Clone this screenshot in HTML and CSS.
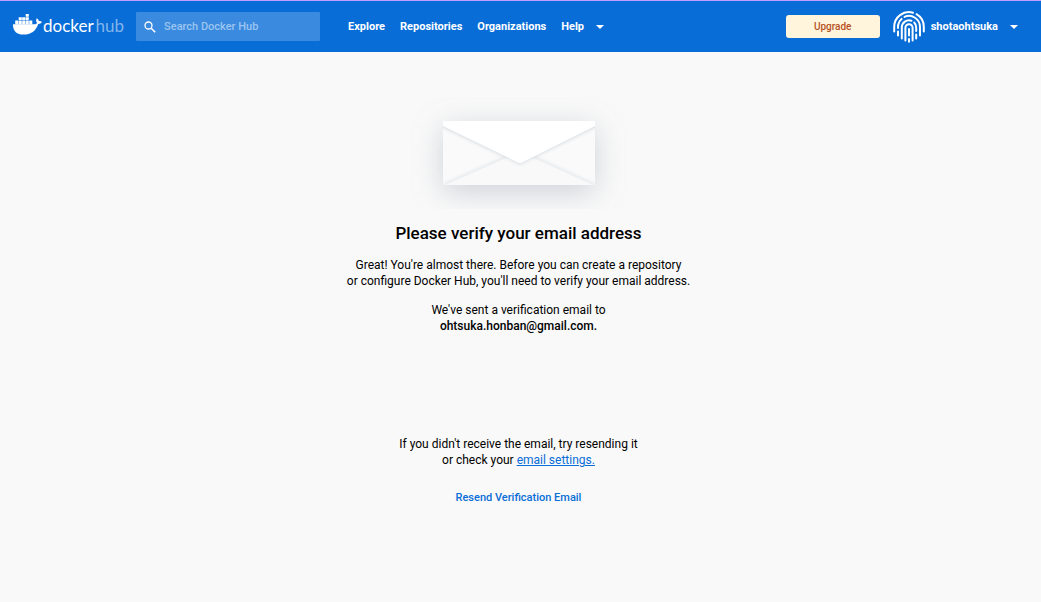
FILE: index.html
```html
<!DOCTYPE html>
<html lang="en">
<head>
	<meta charset="UTF-8" />
	<meta name="viewport" content="width=device-width, initial-scale=1" />
	<title>Docker Hub</title>
	<link rel="stylesheet" href="styles.css">
</head>
<body>

<header class="navbar">
	<a class="logo" href="#">
		<svg class="whale" viewBox="0 0 29 21" width="29" height="21" fill="#fff" aria-hidden="true">
			<path d="M0 10.2h22.3c1.2-.3 1.6-1 1.5-1.7-.9-1.4-.9-2.9.1-4.3 1.2.8 1.8 1.8 1.9 2.9 1.1-.1 2.2 0 3.1.6-.6 1.5-1.8 2.2-3.7 2.3C23 17 18 20.6 10.500 20.600 3.500 20.600-.2 16.800 0 10.200z"/>
			<path d="M2.200 6.500h3.100v4h-3.100zM5.700 6.500h3.100v4h-3.100zM9.200 6.500h3.100v4h-3.100zM12.700 6.500h3.100v4h-3.100zM16.200 6.500h3.100v4h-3.100zM5.700 3.200h3.100v2.900h-3.100zM9.200 3.200h3.100v2.900h-3.100zM12.700 3.200h3.100v2.900h-3.100zM12.700 0h3.100v2.800h-3.100z"/>
		</svg>
		<span class="brand">docker<span class="brand-hub">hub</span></span>
	</a>

	<form class="search">
		<svg viewBox="0 0 12 12" width="12" height="12" fill="none" stroke="#fff" aria-hidden="true">
			<circle cx="4.500" cy="4.500" r="3.500" stroke-width="1.300"/>
			<path d="M7.200 7.200l4 4" stroke-width="1.600"/>
		</svg>
		<input type="search" aria-label="Search Docker Hub" placeholder="Search Docker Hub">
	</form>

	<nav class="menu">
		<a href="#">Explore</a>
		<a href="#">Repositories</a>
		<a href="#">Organizations</a>
		<button type="button" class="dropdown">Help <span class="caret"></span></button>
	</nav>

	<div class="account">
		<button type="button" class="upgrade">Upgrade</button>
		<button type="button" class="dropdown user">
			<svg viewBox="0 0 32 32" width="32" height="32" fill="none" stroke="#fff" stroke-width="2" stroke-linecap="round" aria-hidden="true">
				<path d="M1.200 20.500V16A14.800 14.800 0 0 1 20 1.700M23.500 3.200A14.800 14.800 0 0 1 30.800 16v4.500"/>
				<path d="M5 17v-1A11 11 0 0 1 8.600 7.900M11.500 5.900A11 11 0 0 1 27 16v8.500M5 20.500v4"/>
				<path d="M8.800 27.500V16.500A7.200 7.200 0 0 1 18.500 9.700M21.200 11.500A7.200 7.200 0 0 1 23.200 16.500v3.500M23.200 23.500v4"/>
				<path d="M12.400 29.500V16.800a3.600 3.600 0 0 1 7.200 0v12.700"/>
				<path d="M16 18v6.500M16 28v2.800"/>
			</svg>
			shotaohtsuka <span class="caret"></span>
		</button>
	</div>
</header>

<main class="verify">
	<svg class="envelope" viewBox="0 0 216 112" width="216" height="112" aria-hidden="true">
		<defs>
			<filter id="glow" x="-50%" y="-80%" width="200%" height="260%">
				<feGaussianBlur stdDeviation="15"/>
			</filter>
			<filter id="fold" x="-10%" y="-20%" width="120%" height="140%">
				<feGaussianBlur stdDeviation="1.500"/>
			</filter>
			<clipPath id="paper"><path d="M32 24h152v64H32z"/></clipPath>
		</defs>
		<path d="M32 31h152v64H32z" fill="#8796a3" fill-opacity=".4" filter="url(#glow)"/>
		<path d="M32 24h152v64H32z" fill="#fafafa"/>
		<g clip-path="url(#paper)">
			<path d="M32 88l77-34 75 34" fill="none" stroke="#e6eaed" stroke-width="3" filter="url(#fold)"/>
			<path d="M32 89l77-34 75 34z" fill="#f9f9f9"/>
			<path d="M30 30l79 38 77-38V20H30z" fill="#d8dde2" fill-opacity=".8" filter="url(#fold)"/>
			<path d="M32 24h152v5l-74 37h-2L32 29z" fill="#fff"/>
		</g>
	</svg>

	<h1>Please verify your email address</h1>

	<p>Great! You're almost there. Before you can create a repository<br>
	or configure Docker Hub, you'll need to verify your email address.</p>

	<p>We've sent a verification email to<br>
	<strong>ohtsuka.honban@gmail.com.</strong></p>

	<div class="resend">
		<p>If you didn't receive the email, try resending it<br>
		or check your <a href="#">email settings.</a></p>
		<button type="button">Resend Verification Email</button>
	</div>
</main>

</body>
</html>
```

FILE: styles.css
```css
* {
	box-sizing: border-box;
}

body {
	margin: 0;
	background: #f9f9f9;
	color: #000;
	font: 12px/16px Roboto, Arial, sans-serif;
}

button, input {
	font: inherit;
	color: inherit;
	border: 0;
	padding: 0;
	background: none;
}

button {
	cursor: pointer;
}

.navbar {
	display: flex;
	align-items: center;
	height: 52px;
	padding: 0 23px 0 13px;
	border-top: 1px solid #c39cff;
	background: #086dd7;
	color: #fff;
	font-size: 11px;
	font-weight: 700;
}

.logo {
	display: flex;
	align-items: center;
	gap: 1px;
	color: #fff;
	text-decoration: none;
}

.whale {
	margin-bottom: 5px;
}

.brand {
	display: flex;
	gap: 2px;
	padding-bottom: 2px;
	font: 17px/20px Lato, sans-serif;
}

.brand-hub {
	color: #82b5eb;
}

.search {
	display: flex;
	align-items: center;
	gap: 8px;
	width: 184px;
	height: 29px;
	margin-left: 12px;
	padding: 0 8px;
	border-radius: 1px;
	background: #3a8adf;
}

.search input {
	flex: 1;
	min-width: 0;
	outline: 0;
	font-weight: 500;
}

.search input::placeholder {
	color: #9cc5ef;
	opacity: 1;
}

.menu {
	display: flex;
	gap: 15px;
	margin-left: 28px;
}

.menu a {
	color: #fff;
	text-decoration: none;
}

.dropdown {
	display: flex;
	align-items: center;
}

.caret {
	margin-left: 12px;
	border: 4px solid transparent;
	border-top-color: #fff;
	border-bottom: 0;
}

.account {
	display: flex;
	align-items: center;
	gap: 13px;
	margin-left: auto;
}

.upgrade {
	width: 94px;
	height: 23px;
	border-radius: 3px;
	background: #fff4dc;
	color: #b7521e;
	font-size: 10px;
	font-weight: 500;
}

.user svg {
	margin-right: 6px;
}

.verify {
	display: flex;
	flex-direction: column;
	align-items: center;
	padding: 45px 4px 24px 0;
	text-align: center;
}

.verify h1 {
	margin: 12px 0;
	font-size: 17px;
	line-height: 24px;
	font-weight: 500;
}

.verify p {
	margin: 0 0 13px;
}

.verify strong {
	font-weight: 500;
}

.resend {
	margin-top: 89px;
}

.resend a {
	color: #086dd7;
}

.resend button {
	margin-top: 9px;
	color: #086dd7;
	font-size: 11px;
	font-weight: 500;
}
```
